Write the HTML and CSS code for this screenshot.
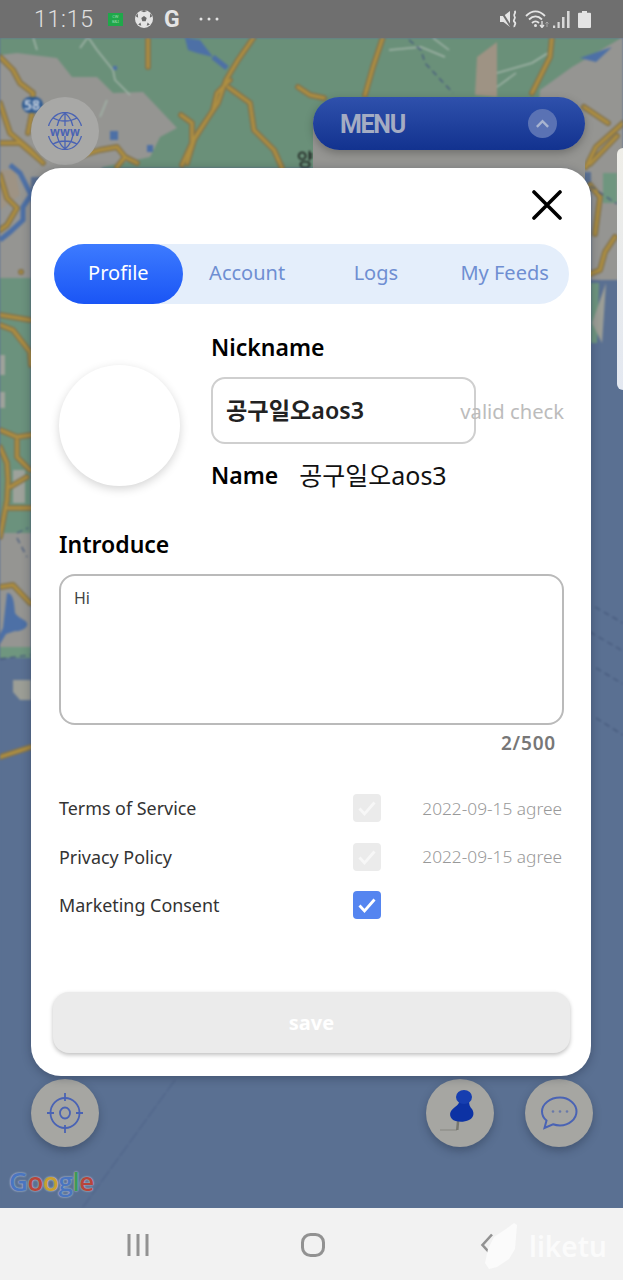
FILE: index.html
```html
<!DOCTYPE html>
<html lang="en">
<head>
<meta charset="utf-8">
<title>Profile</title>
<link rel="stylesheet" href="styles.css">
</head>
<body>
<div class="phone">
  <header class="status">
    <div class="status-left">
      <span class="clock">11:15</span>
      <span class="app-badge"><span>CW</span><span>B&amp;I</span></span>
      <svg class="st-ball" viewBox="0 0 20 20"><circle cx="10" cy="10" r="10" fill="#e4e4e4"/><path d="M10 6.800l3 2.200-1.100 3.500H8.100L7 9z" fill="#6a6a6a"/><path d="M6.500 1l3.500 1.500L13.500 1 10 0zM0.800 7l2.700 1.500L3 3.500zM19.200 7l-2.700 1.500L17 3.500zM3.500 16.500l3.500 1 -1-3.500zM16.500 16.500l-3.500 1 1-3.500z" fill="#6a6a6a"/></svg>
      <span class="st-g">G</span>
      <svg class="st-dots" viewBox="0 0 20 4"><circle cx="2" cy="2" r="1.500"/><circle cx="10" cy="2" r="1.500"/><circle cx="18" cy="2" r="1.500"/></svg>
    </div>
    <div class="status-right">
      <svg class="st-mute" viewBox="0 0 18 18"><path d="M0 6h3.500L10 1v16l-6.500-5H0z" fill="#e4e4e4"/><path d="M1 1l10 16" stroke="#6f6f6f" stroke-width="2"/><path d="M14.500 1c2.500 2-2 3.500 0 5.500s-2.500 3.500 0 5.500-1 3 0 5" fill="none" stroke="#e4e4e4" stroke-width="1.800"/></svg>
      <svg class="st-wifi" viewBox="0 0 25 18"><path d="M1 6c6-6 13-6 19 0M4 9.500c4-4 9-4 13 0M7 13c2.200-2.200 4.800-2.200 7 0" fill="none" stroke="#e4e4e4" stroke-width="1.800"/><circle cx="10.500" cy="15.500" r="1.500" fill="#e4e4e4"/><path d="M17 11v6M15 15l2 2.500 2-2.500" fill="none" stroke="#e4e4e4" stroke-width="1.300"/><path d="M22 17v-5M20.500 13.500l1.500-1.500 1.500 1.500" fill="none" stroke="#a8a8a8" stroke-width="1"/></svg>
      <svg class="st-signal" viewBox="0 0 17 17"><path d="M0 14.500h2.200V17H0zM4.500 11h2.200v6H4.500zM9 6h2.500v11H9zM14 0h2.600v17H14z" fill="#d8d8d8"/></svg>
      <svg class="st-batt" viewBox="0 0 13 17"><path d="M4 0h5v1.800h3a1 1 0 0 1 1 1V16a1 1 0 0 1-1 1H1a1 1 0 0 1-1-1V2.800a1 1 0 0 1 1-1h3z" fill="#e4e4e4"/></svg>
    </div>
  </header>

  <main class="map">
    <svg class="map-art" viewBox="0 38 623 1170" preserveAspectRatio="none">
      <defs>
        <g id="roads" fill="none" stroke-linecap="round" stroke-linejoin="round">
          <path d="M148 38v29M254 37l-16 23-12 20-8 23-23 34-8 26M230 80l-13 13-4 17-21 33M181 115l11 8v20l-10 22M228 87l22 16 4 27 20 20 8 18"/>
          <path d="M383 37l-10 30-8 28M298 87l12 8 14 3M552 37l-2 20-18 36M623 123l-27 24-10 20M584 107l24 16"/>
          <path d="M0 57l13 13 7 13 13 10 -1 20 -4 20M0 103l10 30 20 17 13 13M0 143h20l20 17M67 160l33-10 17-3 8 10-8 10M125 157l12 6"/>
          <path d="M0 175l7 23 10 10-10 17-7 5M21 272h.1M0 315l30 5M0 325l13 5 17 22 1 13M0 430l17 7 14-2M17 440v17l13 13M0 447l7 16 1 17-1 20-7 37M10 487l17-10M8 508h23M0 587l13-2 17 18M0 757l31-10"/>
          <path d="M590 185l10 12-5 37M615 237l-10 15-5 18-10 4M590 164l27-28"/>
        </g>
      </defs>
      <rect x="0" y="38" width="623" height="1170" fill="#5a7092"/>
      <rect x="0" y="38" width="623" height="130" fill="#6a9079"/>
      <rect x="0" y="168" width="31" height="490" fill="#6b927d"/>
      <rect x="591" y="130" width="32" height="150" fill="#959592"/>
      <path class="land" d="M17 53l40 5 15 19h25l16 16 30-1 34 36-17 9-10 20-47 10-10 10H0V55z"/>
      <path class="land" d="M540 90l32-23 51-30v135h-90z"/>
      <path class="land" d="M0 165h31v113H0zM0 533h31v114H0z"/>
      <path class="grn" d="M603 173h14v30h-14zM591 283h8l-2 60h-6zM0 647h31v10H0z"/>
      <path class="pale" d="M0 355h5v20H0zM0 392h5v16H0zM13 470h12v33H13z"/>
      <path class="tan" d="M477 57l20-15v55l-22-2zM0 170h15l5 25-20 15z"/>
      <path class="lake" d="M185 38l15 2 13 17-16-4-9-3zM580 58l32-11-16 15zM110 131h8v9h-8zM147 145h6v7h-6zM113 66h4v4h-4z"/>
      <path class="lake" d="M7 593c6 0 7 8 8 20 4 6 10 6 12 10 2 4-6 9-12 8l-9 3-6 10v-10l3-6z"/>
      <path class="river" d="M10 165l10 8 8 16 3 6-8 12v13l-13 12-10 8M213 57l14 11"/>
      <path class="thin" d="M33 37l4 13M80 48l8-11 9 13 16 20 2 10 15 15M107 100l-7 17M389 50l32-3 24 10M449 50l-16-12M497 73l35-10 16-10M497 87l19-14"/>
      <g stroke="#84734a" stroke-width="6"><use href="#roads"/></g>
      <g stroke="#ad8e42" stroke-width="3"><use href="#roads"/></g>
      <path class="dash" d="M409 40l12 10 4 13 28 30M590 186l27 18M17 538l10 19M17 533l11-5M0 659l31-4M595 607l28 16M590 632l33 19M596 668l27 16M596 718l27 17"/>
      <path class="dash-thin" d="M175 1080L83 1207"/>
      <path class="isle" d="M13 680h18v20H20l-7-8zM606 283l-4 60-10-20z"/>
      <rect x="22" y="97" width="21" height="16" rx="8" fill="#2d5a92"/>
      <text class="shield" x="32" y="110">58</text>
      <text class="place" x="305" y="166">양</text>
    </svg>

    <div class="side-sliver"></div>
    <div class="back-panel"></div>
    <button class="menu"><span class="menu-text">MENU</span><span class="menu-up"><svg viewBox="0 0 16 10"><path d="M2 8l6-6 6 6" fill="none" stroke="#a8b4d0" stroke-width="2.600"/></svg></span></button>

    <div class="fab fab-www">
      <svg viewBox="0 0 36 38" fill="none" stroke="#4a63b4" stroke-width="1.300"><ellipse cx="18" cy="19" rx="17" ry="18.500"/><path d="M18 1v36M6 6c7 4 17 4 24 0M6 32c7-4 17-4 24 0M18 1c-11 9-11 27 0 36M18 1c11 9 11 27 0 36"/><rect x="0" y="14" width="36" height="10" fill="#a8a8a6" stroke="none"/><text class="www" x="18" y="23.500">www</text></svg>
    </div>
    <div class="fab fab-target">
      <svg viewBox="0 0 38 40" fill="none" stroke="#4a63b4" stroke-width="1.800"><ellipse cx="19" cy="20" rx="14.500" ry="15"/><ellipse cx="19" cy="20" rx="5" ry="5.500"/><path d="M19 0v8M19 32v8M1 20h7M30 20h7"/></svg>
    </div>
    <div class="fab fab-pin">
      <svg viewBox="0 0 40 50"><path d="M0 42h17" stroke="#8d8d88" stroke-width="1.300"/><path d="M17 31l-1 11h2.500l1-11z" fill="#77776f"/><path d="M20 12h9c0 5 1 7 3 9 3 5 1 9-3 11-6 3-14 2-17-1-4-5-1-9 3-12 3-2 4-4 5-7z" fill="#0c32a4"/><ellipse cx="24" cy="9" rx="8" ry="7" fill="#163eb0"/></svg>
    </div>
    <div class="fab fab-chat">
      <svg viewBox="0 0 38 34" fill="none"><path d="M20 1.500c9 0 16.500 6.500 16.500 14s-7.500 14-16.500 14c-2.500 0-5-.5-7-1.200L4.500 32l2-7.500C3.500 22 2 19 2 15.500 2 8 10 1.500 20 1.500z" stroke="#4a63b4" stroke-width="2"/><circle cx="13" cy="15.500" r="1.300" fill="#6a7aaa"/><circle cx="20" cy="15.500" r="1.300" fill="#6a7aaa"/><circle cx="27" cy="15.500" r="1.300" fill="#6a7aaa"/></svg>
    </div>
    <div class="google"><span class="g-b">G</span><span class="g-r">o</span><span class="g-y">o</span><span class="g-b">g</span><span class="g-g">l</span><span class="g-r">e</span></div>

    <section class="modal">
      <div class="close-row">
        <svg class="close" viewBox="0 0 30 30"><path d="M2 2l26 26M28 2L2 28" stroke="#000" stroke-width="3.600" stroke-linecap="round"/></svg>
      </div>
      <nav class="tabs">
        <span class="tab tab-active">Profile</span>
        <span class="tab">Account</span>
        <span class="tab">Logs</span>
        <span class="tab">My Feeds</span>
      </nav>
      <div class="body">
        <div class="profile">
          <div class="avatar"></div>
          <div class="fields">
            <div class="label">Nickname</div>
            <div class="nick-row">
              <div class="nick-input">공구일오aos3</div>
              <span class="valid">valid check</span>
            </div>
            <div class="name-row"><span class="label">Name</span><span class="name-value">공구일오aos3</span></div>
          </div>
        </div>
        <div class="label intro-label">Introduce</div>
        <div class="intro-box">Hi</div>
        <div class="count">2/500</div>
        <ul class="consents">
          <li class="consent"><span class="c-name">Terms of Service</span><span class="check check-off"><svg viewBox="0 0 28 28"><path d="M6.500 14.500l5 5.500L21.500 8.500" fill="none" stroke="#f7f7f7" stroke-width="2.800"/></svg></span><span class="c-date">2022-09-15 agree</span></li>
          <li class="consent"><span class="c-name">Privacy Policy</span><span class="check check-off"><svg viewBox="0 0 28 28"><path d="M6.500 14.500l5 5.500L21.500 8.500" fill="none" stroke="#f7f7f7" stroke-width="2.800"/></svg></span><span class="c-date">2022-09-15 agree</span></li>
          <li class="consent"><span class="c-name">Marketing Consent</span><span class="check check-on"><svg viewBox="0 0 28 28"><path d="M6.500 14.500l5 5.500L21.500 8.500" fill="none" stroke="#fff" stroke-width="2.800"/></svg></span></li>
        </ul>
      </div>
      <button class="save">save</button>
    </section>
  </main>

  <footer class="navbar">
    <svg class="nav-recent" viewBox="0 0 24 24"><path d="M3 1v22M12 1v22M21 1v22" stroke="#929292" stroke-width="3"/></svg>
    <svg class="nav-home" viewBox="0 0 24 24"><rect x="1.500" y="1.500" width="21" height="21" rx="8" fill="none" stroke="#929292" stroke-width="3"/></svg>
    <svg class="nav-back" viewBox="0 0 14 24"><path d="M12 1.500L2.500 12 12 22.500" fill="none" stroke="#929292" stroke-width="2.600"/></svg>
    <div class="mark">
      <svg viewBox="0 0 34 46"><path d="M29 0l3 2-2 24-6 10-12 8-8 2-4-6 3-14 6-12 12-8z" fill="#fbfbfb"/></svg>
      <span class="mark-text">liketu</span>
    </div>
  </footer>
</div>
</body>
</html>
```
FILE: styles.css
```css
* { box-sizing: border-box; }
html, body { margin: 0; padding: 0; }
body { font-family: "Noto Sans", "Noto Sans CJK KR", sans-serif; background: #fff; }
ul { margin: 0; padding: 0; list-style: none; }
button { font-family: inherit; border: 0; padding: 0; }

.phone { width: 623px; height: 1280px; display: flex; flex-direction: column; overflow: hidden; }

.status { height: 38px; flex: none; background: #6f6f6f; display: flex; align-items: center; justify-content: space-between; padding: 0 32px 0 34px; color: #dedede; }
.status-left, .status-right { display: flex; align-items: center; }
.clock { font-family: Roboto, sans-serif; font-size: 23px; font-weight: 300; letter-spacing: .8px; color: #e0e0e0; }
.app-badge { width: 15px; height: 13px; margin-left: 14px; background: #1fa84a; color: #9fdcae; font-size: 4px; line-height: 5px; display: flex; flex-direction: column; align-items: center; justify-content: center; }
.st-ball { width: 18px; height: 18px; margin-left: 12px; }
.st-g { font-family: Roboto, sans-serif; font-weight: 700; font-size: 23px; line-height: 1; margin-left: 11px; color: #e4e4e4; }
.st-dots { width: 20px; height: 4px; margin-left: 19px; fill: #e4e4e4; }
.st-mute { width: 18px; height: 18px; }
.st-wifi { width: 25px; height: 18px; margin-left: 7px; }
.st-signal { width: 17px; height: 17px; margin-left: 3px; }
.st-batt { width: 13px; height: 17px; margin-left: 8px; }

.map { flex: 1; position: relative; overflow: hidden; background: #5a7092; }
.map-art { position: absolute; inset: 0; width: 100%; height: 100%; filter: blur(.9px); }
.land { fill: #959592; }
.grn { fill: #6f967f; }
.pale { fill: #9ea29b; }
.tan { fill: #9e9384; }
.lake { fill: #4d70a6; }
.river { fill: none; stroke: #4d70a6; stroke-width: 5; }
.thin { fill: none; stroke: #a3b5a9; stroke-width: 1.500; }
.dash { fill: none; stroke: #46597c; stroke-width: 1.300; stroke-dasharray: 6 4; }
.dash-thin { fill: none; stroke: #4a5f86; stroke-width: 1; stroke-dasharray: 14 2; }
.isle { fill: #9c9e96; }
.shield { font: 700 14px "Noto Sans", sans-serif; fill: #c8d2e0; text-anchor: middle; }
.place { font: 18px "Noto Sans CJK KR", sans-serif; fill: #111; text-anchor: middle; }
.www { font: 700 11.500px "Noto Sans", sans-serif; fill: #4a63b4; stroke: none; text-anchor: middle; letter-spacing: .2px; }

.side-sliver { position: absolute; left: 617px; top: 110px; width: 12px; height: 242px; border-radius: 6px; background: linear-gradient(#efeee8, #e3e8f1); }
.back-panel { position: absolute; left: 313px; top: 80px; width: 272px; height: 80px; background: #959592; }
.menu { position: absolute; left: 313px; top: 59px; width: 272px; height: 53px; border-radius: 27px; background: linear-gradient(#2f51ac, #12328f); box-shadow: 0 3px 8px rgba(0,0,0,.25); display: flex; align-items: center; justify-content: space-between; padding: 0 28px 0 27px; color: #a4acc3; font-family: Roboto, sans-serif; font-size: 25px; font-weight: 700; letter-spacing: -1.300px; }
.menu-text { padding-top: 2px; }
.menu-up { width: 29px; height: 29px; border-radius: 50%; background: #5a72b4; display: flex; align-items: center; justify-content: center; }
.menu-up svg { width: 15px; height: 10px; }

.fab { position: absolute; width: 68px; height: 68px; border-radius: 50%; background: #a6a6a2; box-shadow: 0 4px 8px rgba(30,40,60,.35); display: flex; align-items: center; justify-content: center; }
.fab-www { left: 31px; top: 59px; background: #a8a8a6; box-shadow: none; }
.fab-www svg { width: 36px; height: 38px; }
.fab-target { left: 31px; top: 1041px; }
.fab-target svg { width: 38px; height: 40px; }
.fab-pin { left: 426px; top: 1041px; }
.fab-pin svg { width: 40px; height: 50px; }
.fab-chat { left: 525px; top: 1041px; }
.fab-chat svg { width: 38px; height: 34px; }

.google { position: absolute; left: 9px; top: 1125px; font: 600 26px "Open Sans", sans-serif; line-height: 36px; letter-spacing: -.4px; text-shadow: 0 0 2px #a4b3c8, 0 0 2px #a4b3c8; }
.g-b { color: #4a75c0; }
.g-r { color: #b8453a; }
.g-y { color: #c8a030; }
.g-g { color: #3f9a56; }

.modal { position: absolute; left: 31px; top: 130px; width: 560px; height: 908px; background: #fff; border-radius: 30px; padding: 22px 22px 23px 23px; box-shadow: 0 2px 10px rgba(20,30,50,.35); display: flex; flex-direction: column; }
.close-row { height: 30px; display: flex; justify-content: flex-end; padding-right: 7px; }
.close { width: 30px; height: 30px; }

.tabs { margin-top: 24px; height: 60px; border-radius: 30px; background: #e4eefb; display: flex; }
.tab { flex: 1; display: flex; align-items: center; justify-content: center; padding-bottom: 3px; font-size: 20px; color: #6f8ed2; }
.tab-active { color: #fff; border-radius: 30px; background: linear-gradient(#3d7bff, #1a55f5); }

.body { padding: 0 5px; flex: 1; display: flex; flex-direction: column; }
.profile { margin-top: 28px; display: flex; align-items: flex-start; gap: 31px; }
.avatar { width: 121px; height: 121px; margin-top: 33px; border-radius: 50%; background: #fff; box-shadow: 0 3px 10px rgba(0,0,0,.17); flex: none; }
.fields { flex: 1; }
.label { font-size: 23px; line-height: 30px; font-weight: 600; color: #000; }
.nick-row { position: relative; margin-top: 15px; }
.nick-input { width: 265px; height: 67px; border: 2px solid #cfcfcf; border-radius: 14px; padding: 0 0 3px 13px; display: flex; align-items: center; font-size: 23.200px; font-weight: 600; color: #222; }
.valid { position: absolute; right: 0; top: 20px; font-size: 20.200px; line-height: 28px; color: #bcbcbc; }
.name-row { margin-top: 16px; display: flex; align-items: center; gap: 21px; }
.name-value { font-size: 25px; line-height: 30px; color: #111; }

.intro-label { margin-top: 39px; }
.intro-box { margin-top: 15px; height: 151px; border: 2px solid #bababa; border-radius: 16px; padding: 10px 13px; font-size: 16px; line-height: 24px; color: #444; }
.count { margin-top: 8px; padding-right: 8px; text-align: right; font-size: 19px; line-height: 20px; font-weight: 600; letter-spacing: .8px; color: #777; }

.consents { margin-top: 41px; display: flex; flex-direction: column; gap: 20.500px; }
.consent { height: 28px; display: flex; align-items: center; font-size: 17.900px; color: #333; }
.c-name { width: 294px; }
.check { width: 28px; height: 28px; border-radius: 4px; display: block; }
.check svg { display: block; width: 28px; height: 28px; }
.check-off { background: #ebebeb; }
.check-on { background: #5585f0; }
.c-date { margin-left: auto; padding-right: 2px; font-size: 17.300px; font-weight: 300; color: #999; }

.save { height: 61px; margin: 0 -1px; border-radius: 16px; background: #ebebeb; color: #fff; font-size: 20px; font-weight: 700; box-shadow: 0 2px 4px rgba(0,0,0,.25); }

.navbar { height: 72px; flex: none; background: #f2f2f2; position: relative; display: flex; align-items: center; }
.nav-recent { position: absolute; left: 126px; top: 25px; width: 24px; height: 24px; }
.nav-home { position: absolute; left: 301px; top: 25px; width: 24px; height: 24px; }
.nav-back { position: absolute; left: 480px; top: 25px; width: 14px; height: 24px; }
.mark { position: absolute; left: 485px; top: 15px; display: flex; align-items: center; gap: 10px; }
.mark svg { width: 34px; height: 46px; }
.mark-text { font-size: 28px; font-weight: 600; color: #fbfbfb; }
```
